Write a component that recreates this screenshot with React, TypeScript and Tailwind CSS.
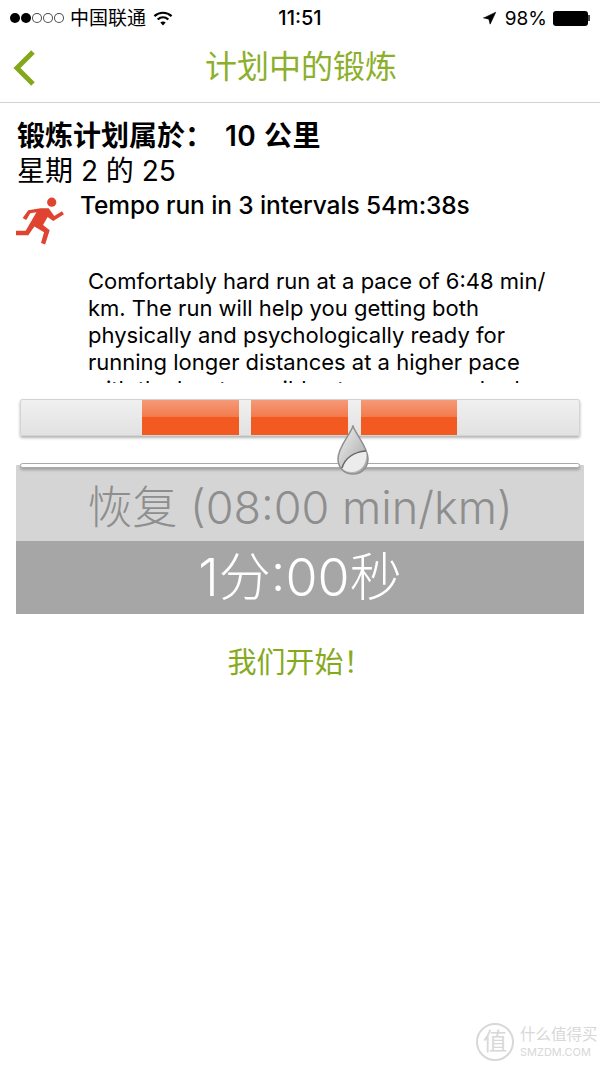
import { Navigation } from "lucide-react";

const sans = "font-['Inter','Noto_Sans_CJK_SC',sans-serif]";

// Status bar signal dots
function SignalDots() {
    return (
        <div className="flex items-center gap-[1px]">
            {[true, true, false, false, false].map((filled, i) => (
                <span
                    key={i}
                    className={`w-[10px] h-[10px] rounded-full border border-black/70 ${filled ? "bg-black" : "bg-white"}`}
                />
            ))}
        </div>
    );
}

function WifiIcon() {
    return (
        <svg width="20" height="15" viewBox="0 0 18 14" fill="none" stroke="black" strokeWidth="2">
            <path d="M1 4.8C5.5 .6 12.5 .6 17 4.8" />
            <path d="M4 8C7 5.3 11 5.3 14 8" />
            <path d="M9 13.5 6.5 10.8C8 9.6 10 9.6 11.5 10.8Z" fill="black" stroke="none" />
        </svg>
    );
}

function RunnerIcon() {
    return (
        <svg width="51" height="50" viewBox="0 0 50 48" fill="#e0432f">
            <circle cx="36" cy="5.5" r="4.5" />
            <path d="M13 13.5 25 11.5 33 11.5 38.5 19 46 14.5 48 17.5 37.5 24 32 20 27.5 28 34 33 29.5 47 25.5 45.5 28.5 35 19 29.5 13 38 1 38 1 33.5 10.5 33.5 21 15.5 15 16.5 11 23 7.5 21Z" />
        </svg>
    );
}

function SliderThumb() {
    return (
        <svg width="34" height="52" viewBox="0 0 34 52" className="absolute left-[320px] top-[-40px]">
            <defs>
                <linearGradient id="drop" x1="0" y1="0" x2="1" y2="1">
                    <stop offset="0" stopColor="#f2f2f2" />
                    <stop offset="1" stopColor="#a0a0a0" />
                </linearGradient>
            </defs>
            <path d="M17 1C20 10 32 22 32 34 32 43 25 49 17 49 9 49 2 43 2 34 2 22 14 10 17 1Z" fill="url(#drop)" stroke="#8f8f8f" strokeWidth="1.5" />
            <path d="M6 43C9 33 18 27 30 26 32 36 27 46 17 47 12 47 8 46 6 43Z" fill="#ececec" />
            <path d="M6 43C9 33 18 27 30 26" fill="none" stroke="#666" strokeWidth="1.5" />
        </svg>
    );
}

function Segment({ className }: { className: string }) {
    return (
        <div className={`flex flex-col ${className}`}>
            <div className="h-[17px] bg-gradient-to-b from-[#f59a78] to-[#f27a4c]" />
            <div className="flex-1 bg-[#f25a22]" />
        </div>
    );
}

export default function App() {
    return (
        <div className={`relative w-[600px] h-[1067px] bg-white overflow-hidden text-black ${sans}`}>
            {/* Status bar */}
            <div className="h-[35px] flex items-center justify-between pl-[10px] pr-[10px] pt-[1px] text-[19px]">
                <div className="flex items-center gap-[6px] w-[210px]">
                    <SignalDots />
                    <span className="text-[19px] leading-none">中国联通</span>
                    <span className="ml-[1px]"><WifiIcon /></span>
                </div>
                <span className="text-[20px] font-medium leading-none">11:51</span>
                <div className="flex items-center justify-end gap-[6px] w-[210px]">
                    <Navigation size={15} fill="black" strokeWidth={1} className="mr-[2px]" />
                    <span className="leading-none">98%</span>
                    <div className="flex items-center">
                        <div className="w-[35px] h-[15px] rounded-[3px] bg-black" />
                        <div className="w-[2px] h-[6px] bg-black/70" />
                    </div>
                </div>
            </div>

            {/* Nav */}
            <div className="relative h-[68px] flex items-center justify-center border-b border-[#d2d2d2]">
                <svg width="24" height="36" viewBox="0 0 24 36" fill="none" className="absolute left-[13px] top-[15px]">
                    <path d="M20 2 4 18 20 34" stroke="#84a81c" strokeWidth="5" />
                </svg>
                <span className="text-[32px] text-[#8db02c] leading-none pb-[4px] ml-[2px]">计划中的锻炼</span>
            </div>

            {/* Plan info */}
            <div className="pl-[17px] pt-[16px]">
                <div className="h-[33px] flex items-center text-[28px] font-semibold leading-none">
                    <span>锻炼计划属於：</span>
                    <span className="ml-[12px] tracking-[0.5px]">10 公里</span>
                </div>
                <div className="h-[36px] pt-[1px] flex items-center text-[28px] leading-none">星期 2 的 25</div>
                <div className="flex items-start">
                    <div className="pt-[8px] -ml-[2px]"><RunnerIcon /></div>
                    <span className="ml-[14px] text-[24.5px] font-medium leading-[34px] tracking-[-0.1px] whitespace-nowrap">
                        Tempo run in 3 intervals 54m:38s
                    </span>
                </div>
            </div>

            {/* Description, clipped by the bar below */}
            <div className="absolute left-[88px] top-[268px] w-[480px] h-[115px] overflow-hidden text-[22px] leading-[27px] whitespace-nowrap">
                Comfortably hard run at a pace of 6:48 min/
                <br />km. The run will help you getting both
                <br />physically and psychologically ready for
                <br />running longer distances at a higher pace
                <br />with the least possible stress on your body
            </div>

            {/* Interval bar */}
            <div className="absolute left-[20px] top-[399px] w-[560px] h-[37px] flex bg-gradient-to-b from-[#f0f0f0] to-[#e2e2e2] border border-[#d4d4d4] rounded-[2px] shadow-[0_2px_3px_rgba(0,0,0,0.3)]">
                <div className="w-[121px]" />
                <Segment className="w-[97px]" />
                <div className="w-[12px]" />
                <Segment className="w-[97px]" />
                <div className="w-[13px]" />
                <Segment className="w-[96px]" />
            </div>

            {/* Panels and slider */}
            <div className="absolute left-[16px] top-[465px] w-[568px]">
                <div className="relative h-[76px] bg-[#d5d5d5] flex items-center justify-center text-[#8e8e8e] text-[45px] font-light leading-none pt-[9px] whitespace-nowrap">
                    <div className="absolute left-[4px] right-[4px] top-[-2px] h-[5px] bg-white border border-[#a9a9a9] rounded-full shadow-[0_2px_3px_rgba(0,0,0,0.25)]" />
                    <SliderThumb />
                    <span>恢复 (08:00 min/km)</span>
                </div>
                <div className="h-[73px] bg-[#a6a6a6] flex items-center justify-center text-white text-[52px] font-light leading-none">
                    1分:00秒
                </div>
            </div>

            <div className="absolute left-0 top-[646px] w-[600px] text-center text-[29px] leading-[34px] text-[#86aa1e]">
                我们开始！
            </div>

            {/* Watermark */}
            <div className="absolute left-[476px] top-[1023px] flex items-center gap-[6px] text-[#d8d8d8]">
                <div className="w-[38px] h-[38px] rounded-full border-2 border-[#d8d8d8] flex items-center justify-center text-[24px] leading-none">值</div>
                <div className="flex flex-col">
                    <span className="text-[15.5px] leading-[20px] whitespace-nowrap">什么值得买</span>
                    <span className="text-[11px] leading-[14px] whitespace-nowrap">SMZDM.COM</span>
                </div>
            </div>
        </div>
    );
}
